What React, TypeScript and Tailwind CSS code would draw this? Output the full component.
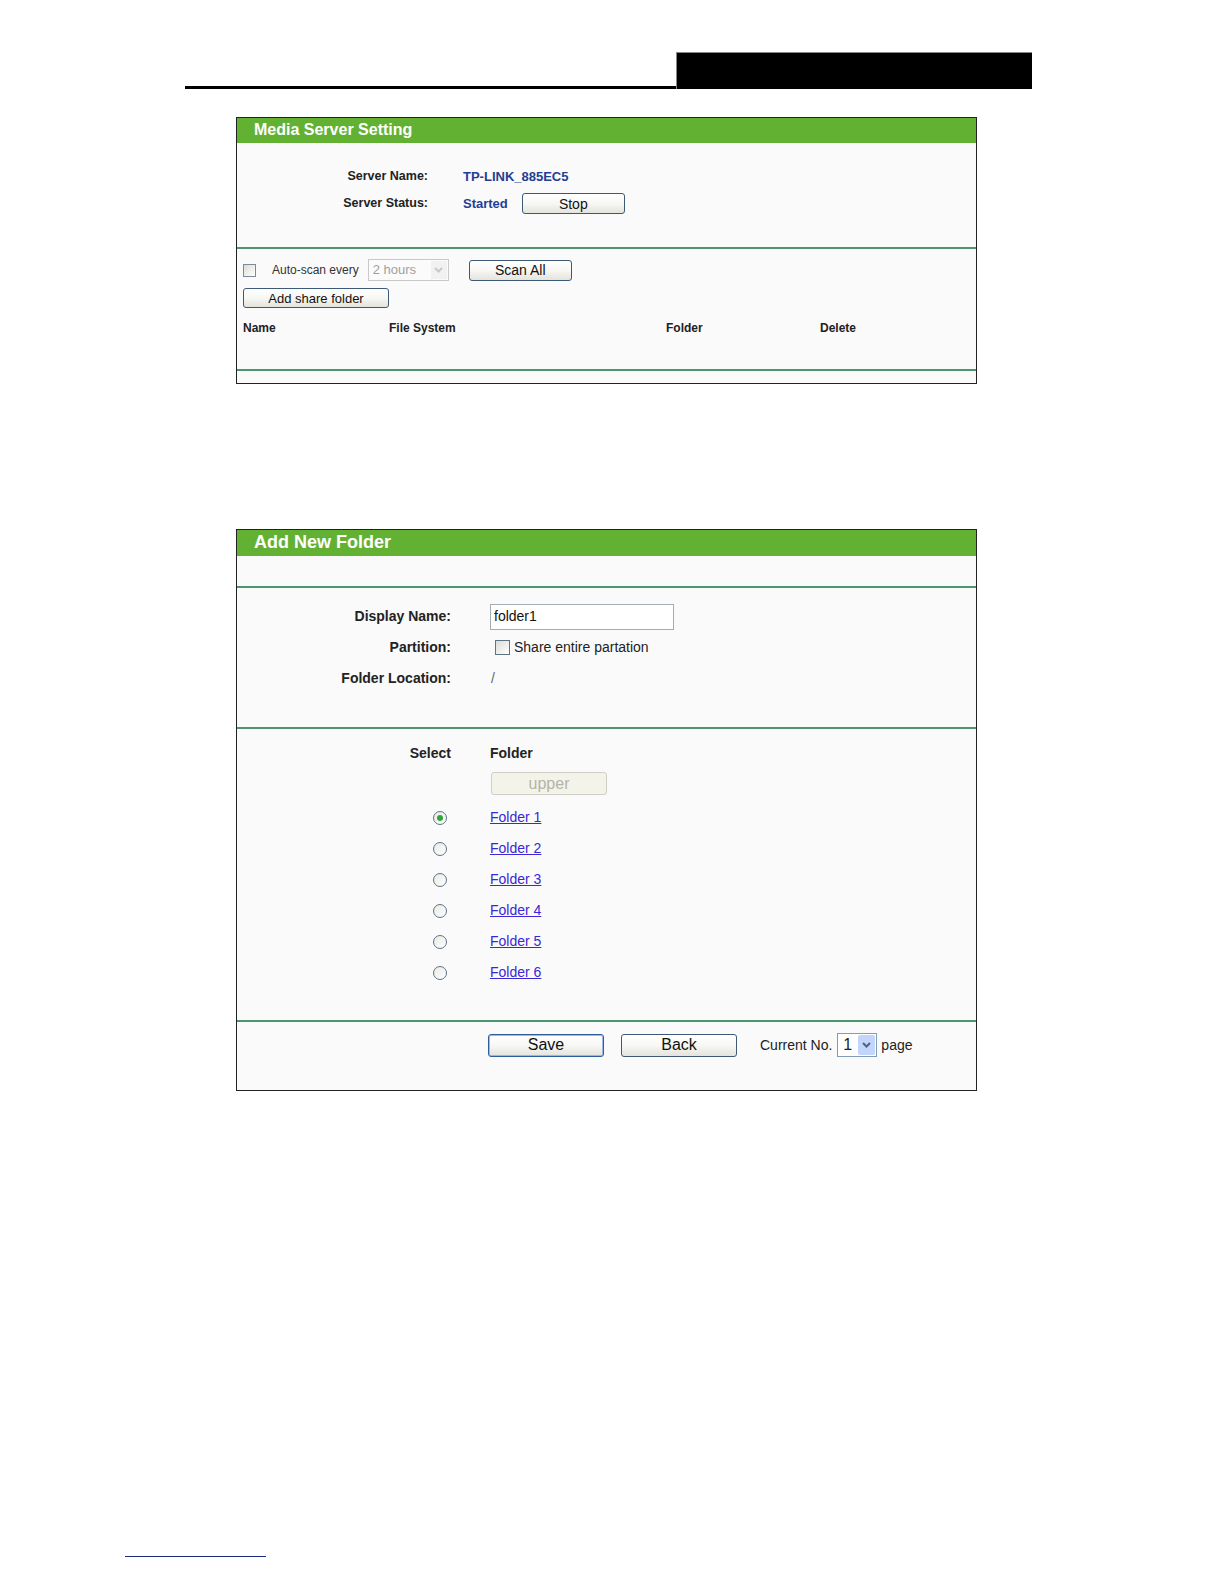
import * as React from 'react';

const font = { fontFamily: '"Liberation Sans", Arial, sans-serif' };

const Chevron: React.FC<{ color: string }> = ({ color }) => (
  <svg width="9" height="6" viewBox="0 0 9 6">
    <path d="M1 1 L4.5 4.5 L8 1" fill="none" stroke={color} strokeWidth="2" />
  </svg>
);

const XpButton: React.FC<{ label: string; className?: string; focused?: boolean }> = ({ label, className, focused }) => (
  <button
    className={`block shrink-0 rounded-[3px] border bg-gradient-to-b from-white via-[#f7f7f4] to-[#e4e3dc] text-[#111] leading-none ${
      focused ? 'border-[#2f5c9a] shadow-[inset_0_0_0_1px_#9bb8e8]' : 'border-[#3c5a78]'
    } ${className ?? ''}`}
  >
    {label}
  </button>
);

const Radio: React.FC<{ checked?: boolean }> = ({ checked }) => (
  <span className="flex h-[14px] w-[14px] items-center justify-center rounded-full border border-[#5d7386] bg-gradient-to-br from-[#e9e9e4] to-white">
    {checked && <span className="h-[6px] w-[6px] rounded-full bg-[#2fa53a]" />}
  </span>
);

const Divider = () => <div className="h-[2px] bg-[#4d9471]" />;

const MediaServerPanel = () => (
  <div className="ml-[236px] w-[741px] border border-[#222] bg-[#fafafa]">
    <div className="h-[25px] bg-[#63b132] pl-[17px] text-[16px] font-bold leading-[24px] text-white">
      Media Server Setting
    </div>
    <div className="pb-[30px] pt-[20px]">
      <div className="grid grid-cols-[191px_1fr] gap-x-[35px]">
        <div className="h-[27px] text-right text-[12.5px] font-bold leading-[27px] text-[#222]">Server Name:</div>
        <div className="h-[27px] text-[13px] font-bold leading-[27px] text-[#1f3f94]">TP-LINK_885EC5</div>
        <div className="h-[27px] text-right text-[12.5px] font-bold leading-[27px] text-[#222]">Server Status:</div>
        <div className="flex h-[27px] items-center gap-[14px]">
          <span className="text-[13px] font-bold text-[#1f3f94]">Started</span>
          <XpButton label="Stop" className="h-[21px] w-[103px] text-[14px]" />
        </div>
      </div>
    </div>
    <Divider />
    <div className="px-[6px] pt-[10px]">
      <div className="flex h-[22px] items-center">
        <span className="h-[13px] w-[13px] border border-[#7a8a99] bg-gradient-to-br from-[#dcdcd6] to-white" />
        <span className="ml-[16px] text-[12px] text-[#333]">Auto-scan every</span>
        <div className="ml-[9px] flex h-[22px] w-[81px] items-center border border-[#c9c9c9] bg-[#fbfbfb]">
          <span className="flex-1 pl-[4px] text-[13px] text-[#a0a0a0]">2 hours</span>
          <span className="mr-[1px] flex h-[18px] w-[16px] items-center justify-center bg-[#f1f1f1]">
            <Chevron color="#c8c8c8" />
          </span>
        </div>
        <XpButton label="Scan All" className="ml-[20px] h-[21px] w-[103px] text-[14px]" />
      </div>
      <div className="mt-[7px] flex">
        <XpButton label="Add share folder" className="h-[20px] w-[146px] text-[13px]" />
      </div>
      <div className="mt-[10px] grid h-[20px] grid-cols-[146px_277px_154px_1fr] items-center text-[12px] font-bold text-[#222]">
        <span>Name</span>
        <span>File System</span>
        <span>Folder</span>
        <span>Delete</span>
      </div>
    </div>
    <div className="h-[31px]" />
    <Divider />
    <div className="h-[12px]" />
  </div>
);

const folders = ['Folder 1', 'Folder 2', 'Folder 3', 'Folder 4', 'Folder 5', 'Folder 6'];

const AddFolderPanel = () => (
  <div className="ml-[236px] mt-[145px] w-[741px] border border-[#222] bg-[#fafafa]">
    <div className="h-[26px] bg-[#63b132] pl-[17px] text-[18px] font-bold leading-[25px] text-white">
      Add New Folder
    </div>
    <div className="h-[30px]" />
    <Divider />
    <div className="pb-[33px] pt-[13px]">
      <div className="grid grid-cols-[214px_1fr] gap-x-[39px] text-[14px]">
        <div className="h-[31px] text-right font-bold leading-[31px] text-[#222]">Display Name:</div>
        <div className="flex h-[31px] items-center">
          <div className="flex h-[26px] w-[184px] items-center border border-[#a5acb2] bg-white pl-[3px] text-[#111]">folder1</div>
        </div>
        <div className="h-[31px] text-right font-bold leading-[31px] text-[#222]">Partition:</div>
        <div className="flex h-[31px] items-center">
          <span className="ml-[5px] h-[15px] w-[15px] border border-[#5d7386] bg-gradient-to-br from-[#dcdcd6] to-white" />
          <span className="ml-[4px] text-[#222]">Share entire partation</span>
        </div>
        <div className="h-[31px] text-right font-bold leading-[31px] text-[#222]">Folder Location:</div>
        <div className="h-[31px] pl-[1px] leading-[31px] text-[#666]">/</div>
      </div>
    </div>
    <Divider />
    <div className="pb-[32px] pt-[12px]">
      <div className="grid grid-cols-[214px_1fr] gap-x-[39px] text-[14px]">
        <div className="h-[24px] text-right font-bold leading-[24px] text-[#222]">Select</div>
        <div className="h-[24px] font-bold leading-[24px] text-[#222]">Folder</div>
        <div className="h-[37px]" />
        <div className="flex h-[37px] items-center">
          <div className="ml-[1px] flex h-[23px] w-[116px] items-center justify-center rounded-[3px] border border-[#cfcfc6] bg-[#f3f3ea] text-[16px] text-[#b4b4a8]">
            upper
          </div>
        </div>
        {folders.map((f, i) => (
          <React.Fragment key={f}>
            <div className="flex h-[31px] items-center justify-end pr-[4px]">
              <Radio checked={i === 0} />
            </div>
            <div className="flex h-[31px] items-center">
              <a className="cursor-pointer text-[#3b27d6] underline">{f}</a>
            </div>
          </React.Fragment>
        ))}
      </div>
    </div>
    <Divider />
    <div className="box-content flex h-[24px] items-center pb-[33px] pl-[251px] pt-[11px]">
      <XpButton label="Save" focused className="h-[23px] w-[116px] text-[16px]" />
      <XpButton label="Back" className="ml-[17px] h-[23px] w-[116px] text-[16px]" />
      <span className="ml-[23px] text-[14px] text-[#222]">Current No.</span>
      <div className="ml-[5px] flex h-[24px] w-[40px] items-center border border-[#7f9db9] bg-white">
        <span className="flex-1 pl-[5px] text-[16px] text-[#222]">1</span>
        <span className="mr-[1px] flex h-[20px] w-[17px] items-center justify-center rounded-[2px] bg-[#c3d5fb]">
          <Chevron color="#4d6185" />
        </span>
      </div>
      <span className="ml-[4px] text-[14px] text-[#222]">page</span>
    </div>
  </div>
);

const App: React.FC = () => {
  return (
    <div className="h-[1584px] w-[1224px] overflow-hidden bg-white pt-[52px]" style={font}>
      <div className="ml-[185px] flex w-[847px] items-end">
        <div className="h-[3px] flex-1 bg-black" />
        <div className="h-[37px] w-[356px] border-l border-t border-[#888] bg-black" />
      </div>
      <div className="mt-[28px]">
        <MediaServerPanel />
      </div>
      <AddFolderPanel />
      <div className="ml-[125px] mt-[465px] h-px w-[141px] bg-[#1a2a80]" />
    </div>
  );
};

export default App;
